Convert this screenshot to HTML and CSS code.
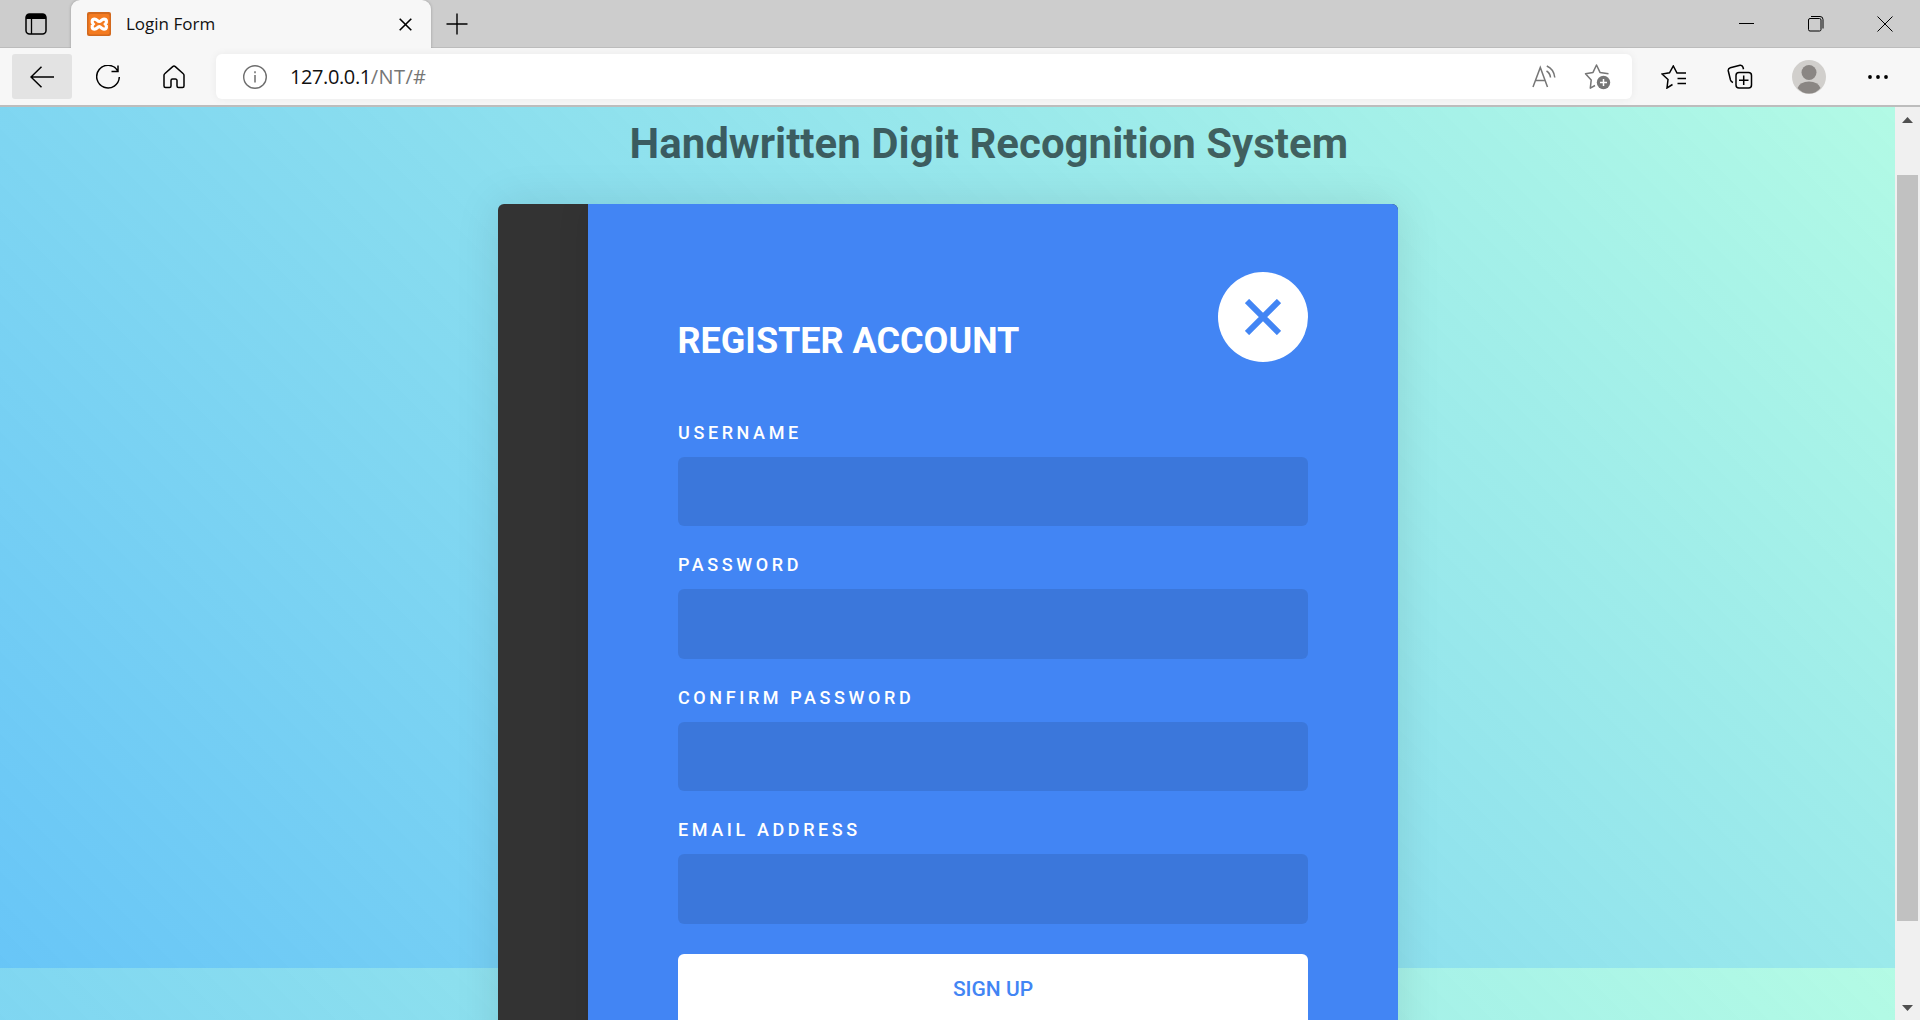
FILE: index.html
```html
<!DOCTYPE html>
<html lang="en">
<head>
<meta charset="utf-8">
<title>Login Form</title>
<link rel="stylesheet" href="styles.css">
</head>
<body>
<div class="browser">
  <header class="tabstrip">
    <div class="tab-actions">
      <svg width="22" height="22" viewBox="0 0 22 22"><rect x="1" y="1" width="20" height="20" rx="3.5" fill="none" stroke="#000" stroke-width="1.5"/><path d="M1 6V4a3 3 0 0 1 3-3h14a3 3 0 0 1 3 3v2z"/><path d="M6.5 6v15" stroke="#000" stroke-width="1.3"/></svg>
    </div>
    <div class="tab">
      <svg class="favicon" width="24" height="24" viewBox="0 0 24 24"><rect width="24" height="24" rx="2" fill="#d2691e"/><rect x="1.5" y="2" width="21" height="20.5" rx="2" fill="#f47b20"/><path d="M7.6 7.2c2.6 0 2.600 2.300 4.700 2.300s2.100-2.300 4.700-2.300c3 0 3 3.300 1.400 4.900 1.600 1.600 1.600 5-1.400 5-2.600 0-2.600-2.400-4.700-2.400s-2.100 2.400-4.700 2.400c-3 0-3-3.400-1.400-5-1.600-1.600-1.600-4.900 1.400-4.900z" fill="none" stroke="#fff" stroke-width="3.2"/></svg>
      <span class="tab-title">Login Form</span>
      <svg class="tab-close" width="13" height="13" viewBox="0 0 13 13"><path d="M.7.7l11.600 11.600M12.300.7L.7 12.300" stroke="#000" stroke-width="1.6"/></svg>
    </div>
    <svg class="new-tab" width="22" height="22" viewBox="0 0 22 22"><path d="M11 .5v21M.5 11h21" stroke="#000" stroke-width="1.400"/></svg>
    <div class="window-controls">
      <svg width="16" height="16" viewBox="0 0 16 16"><path d="M0 7.500h15" stroke="#000"/></svg>
      <svg width="16" height="16" viewBox="0 0 16 16"><rect x=".5" y="2.500" width="12.500" height="12.500" rx="1.500" fill="none" stroke="#000"/><path d="M3 .5h9a3 3 0 0 1 3 3v9" fill="none" stroke="#000"/></svg>
      <svg width="16" height="16" viewBox="0 0 16 16"><path d="M.5.5l15 15M15.500.5l-15 15" stroke="#000"/></svg>
    </div>
  </header>
  <nav class="toolbar">
    <div class="nav-btn nav-back"><svg width="24" height="22" viewBox="0 0 24 22"><path d="M11.500.7L1 11l10.500 10.300M1 11h23" fill="none" stroke="#000" stroke-width="1.500"/></svg></div>
    <div class="nav-btn"><svg width="24" height="24" viewBox="0 0 24 24"><path d="M21.500 5.500A11.300 11.300 0 1 0 23.300 12M22 .5v6h-6.500" fill="none" stroke="#000" stroke-width="1.500"/></svg></div>
    <div class="nav-btn"><svg width="22" height="24" viewBox="0 0 22 24"><path d="M1 10.300a2 2 0 0 1 .7-1.500L9.700 1.600a2 2 0 0 1 2.600 0l8 7.200a2 2 0 0 1 .7 1.500V21a1.500 1.500 0 0 1-1.500 1.500H15.500a1.500 1.500 0 0 1-1.500-1.500v-5.500a1.500 1.500 0 0 0-1.500-1.500h-3A1.500 1.500 0 0 0 8 15.500V21a1.500 1.500 0 0 1-1.500 1.500h-4A1.500 1.500 0 0 1 1 21z" fill="none" stroke="#000" stroke-width="1.500"/></svg></div>
    <div class="address">
      <svg width="24" height="24" viewBox="0 0 24 24"><circle cx="12" cy="12" r="11.300" fill="none" stroke="#6e6e6e" stroke-width="1.400"/><path d="M12 10v7.500M12 6.300v2" stroke="#6e6e6e" stroke-width="1.500"/></svg>
      <span class="url">127.0.0.1<span class="url-path">/NT/#</span></span>
      <div class="address-actions">
        <svg width="24" height="23" viewBox="0 0 24 23"><path d="M1 22L8.300 2.500 15.500 22M3.700 15.500h9.200M14.500 6q3.500 2 4 6.500M14.800 1q7 3 8 11.500" fill="none" stroke="#767676" stroke-width="1.500"/></svg>
        <svg width="28" height="27" viewBox="0 0 28 27"><path d="M11 22.500l-4.700 2.600.9-8L1.500 10.700l7.500-1.300L12.500 2 16 9.400l8.500 1.300" fill="none" stroke="#767676" stroke-width="1.500" stroke-linejoin="round"/><circle cx="19.500" cy="19.500" r="6.700" fill="#767676"/><path d="M19.500 16v7M16 19.500h7" stroke="#fff" stroke-width="1.500"/></svg>
      </div>
    </div>
    <div class="toolbar-actions">
      <svg width="26" height="24" viewBox="0 0 26 24"><path d="M11.500 19.500L6 23l1-8.500L1 9l7.500-1.200L12.300 1 16 8h9M16.500 13.500H25M16.500 18.500H25" fill="none" stroke="#000" stroke-width="1.500"/></svg>
      <svg width="26" height="25" viewBox="0 0 26 25"><path d="M6 18.500q-2-.7-2.500-2.500L1.300 7q-.5-2.500 2-3.200L13 1.200q2.300-.4 3 2l.5 2" fill="none" stroke="#000" stroke-width="1.500"/><rect x="9" y="8.500" width="15.500" height="15.500" rx="3" fill="none" stroke="#000" stroke-width="1.500"/><path d="M16.700 11.500v9.500M12 16.300h9.500" stroke="#000" stroke-width="1.500"/></svg>
      <svg class="avatar" width="34" height="34" viewBox="0 0 34 34"><circle cx="17" cy="17" r="17" fill="#d1cfcc"/><circle cx="17" cy="12.500" r="7.500" fill="#8a8683"/><path d="M5.500 28Q8 21.500 17 21.500T28.500 28Q24 33.500 17 33.500T5.500 28z" fill="#8a8683"/></svg>
      <svg width="20" height="4" viewBox="0 0 20 4"><circle cx="2" cy="2" r="1.900"/><circle cx="10" cy="2" r="1.900"/><circle cx="18" cy="2" r="1.900"/></svg>
    </div>
  </nav>
  <div class="viewport">
    <main class="page">
      <h1 class="page-title">Handwritten Digit Recognition System</h1>
      <section class="card">
        <div class="panel">
          <div class="panel-head">
            <h2 class="panel-title">Register Account</h2>
            <div class="toggle"><svg width="36" height="36" viewBox="0 0 36 36"><path d="M2 2l32 32M34 2L2 34" stroke="#4285f4" stroke-width="6"/></svg></div>
          </div>
          <form class="form">
            <label class="group"><span class="label">Username</span><input class="field" type="text"></label>
            <label class="group"><span class="label">Password</span><input class="field" type="password"></label>
            <label class="group"><span class="label">Confirm Password</span><input class="field" type="password"></label>
            <label class="group"><span class="label">Email Address</span><input class="field" type="email"></label>
            <button class="submit" type="button">Sign Up</button>
          </form>
        </div>
      </section>
    </main>
    <div class="scrollbar">
      <svg width="11" height="6" viewBox="0 0 11 6"><path d="M0 6L5.500 0 11 6z" fill="#505050"/></svg>
      <div class="thumb"></div>
      <svg width="11" height="6" viewBox="0 0 11 6"><path d="M0 0L5.500 6 11 0z" fill="#505050"/></svg>
    </div>
  </div>
</div>
</body>
</html>
```
FILE: styles.css
```css
* { box-sizing: border-box; }
html, body { margin: 0; height: 100%; overflow: hidden; }
svg { display: block; flex: none; }

.browser {
  display: flex;
  flex-direction: column;
  height: 1020px;
  background: #f7f7f7;
  font-family: "Open Sans", "Noto Sans", sans-serif;
}

.tabstrip {
  display: flex;
  align-items: center;
  height: 48px;
  background: #cdcdcd;
  box-shadow: inset 0 -1px #bcbcbc;
}
.tab-actions {
  width: 71px;
  padding-left: 25px;
}
.tab {
  display: flex;
  align-items: center;
  width: 360px;
  height: 48px;
  padding: 0 19px 0 16px;
  background: #f7f7f7;
  border-radius: 9px 9px 0 0;
  box-shadow: 0 0 3px rgba(0, 0, 0, .25);
  clip-path: inset(0 -4px 0 -4px);
}
.tab-title {
  margin-left: 15px;
  padding-bottom: 2px;
  font-size: 17px;
  color: #111;
}
.tab-close { margin: 1px 0 0 auto; }
.new-tab { margin-left: 15px; }
.window-controls {
  display: flex;
  gap: 53px;
  margin-left: auto;
  padding-right: 27px;
}

.toolbar {
  display: flex;
  align-items: center;
  height: 59px;
  padding: 1px 32px 1px 12px;
  border-bottom: 2px solid #bdbdbd;
}
.nav-btn {
  display: flex;
  align-items: center;
  justify-content: center;
  width: 60px;
  height: 45px;
  margin-right: 6px;
  border-radius: 3px;
}
.nav-back { background: #e3e3e3; }
.address {
  display: flex;
  align-items: center;
  width: 1416px;
  height: 45px;
  margin-left: 6px;
  padding: 0 20px 0 27px;
  background: #fff;
  border-radius: 6px;
  box-shadow: 0 0 8px rgba(0, 0, 0, .06);
}
.url {
  margin-left: 23px;
  font-size: 20px;
  letter-spacing: -.4px;
  color: #111;
}
.url-path {
  letter-spacing: .4px;
  color: #767676;
}
.address-actions {
  display: flex;
  align-items: center;
  gap: 28px;
  margin-left: auto;
}
.toolbar-actions {
  display: flex;
  align-items: center;
  flex: 1;
  justify-content: space-between;
  padding-left: 29px;
}
.avatar { margin: 0 2px 0 -2px; }

.viewport {
  display: flex;
  flex: 1;
  min-height: 0;
}
.page {
  flex: 1;
  overflow: hidden;
  background: linear-gradient(45deg, rgba(66, 183, 245, .8), rgba(66, 245, 189, .4)) 0 -52px / 100% 913px #fff;
  font-family: Roboto, sans-serif;
}
.page-title {
  margin: 0;
  padding: 11px 0 0 629.5px;
  font-size: 42px;
  line-height: 52px;
  font-weight: 700;
  color: rgba(0, 0, 0, .6);
  white-space: nowrap;
}
.card {
  width: 900px;
  height: 900px;
  margin: 34px 0 0 498px;
  padding-left: 90px;
  background: #333;
  border-radius: 6px;
  box-shadow: 0 0 45px rgba(0, 0, 0, .1);
  overflow: hidden;
}
.panel {
  height: 100%;
  padding: 67.5px 90px 0;
  background: #4285f4;
  box-shadow: 0 0 30px rgba(0, 0, 0, .1);
}
.panel-head {
  display: flex;
  justify-content: space-between;
  height: 152.3px;
}
.panel-title {
  margin: 46.5px 0 0 -.5px;
  font-size: 36px;
  line-height: 46px;
  font-weight: 700;
  color: #fff;
  text-transform: uppercase;
}
.toggle {
  display: flex;
  align-items: center;
  justify-content: center;
  width: 90px;
  height: 90px;
  background: #fff;
  border-radius: 50%;
}
.form {
  display: flex;
  flex-direction: column;
}
.group {
  display: flex;
  flex-direction: column;
  gap: 15px;
  margin-bottom: 30px;
}
.label {
  font-size: 18px;
  line-height: 18px;
  font-weight: 500;
  letter-spacing: 3.6px;
  color: #fff;
  text-transform: uppercase;
}
.field {
  width: 100%;
  height: 69.5px;
  border: 0;
  border-radius: 6px;
  background: rgba(0, 0, 0, .1);
}
.submit {
  height: 71px;
  padding: 0;
  border: 0;
  border-radius: 6px;
  background: #fff;
  color: #4285f4;
  font: 500 21px/24px Roboto, sans-serif;
  text-transform: uppercase;
}

.scrollbar {
  display: flex;
  flex-direction: column;
  align-items: center;
  justify-content: space-between;
  width: 25px;
  padding: 10px 0 9px;
  background: #f0f0f0;
}
.thumb {
  width: 21px;
  height: 746px;
  margin-bottom: 32px;
  background: #c1c1c1;
}
```
